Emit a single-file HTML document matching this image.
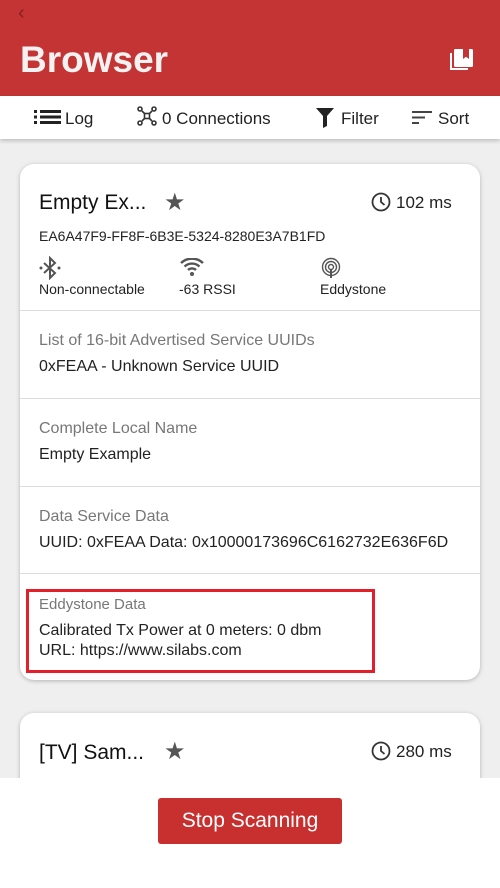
<!DOCTYPE html><html><head><style>
body{margin:0;width:500px;height:888px;overflow:hidden;background:#efefef;font-family:"Liberation Sans",sans-serif;position:relative}
.hdr{position:absolute;top:0;left:0;width:500px;height:96px;background:#c43434}
.hdr h1{position:absolute;left:20px;top:39px;margin:0;font-weight:bold;font-size:37px;color:#f2f2f2}
.tb{position:absolute;top:96px;left:0;width:500px;height:43px;background:#fff;box-shadow:0 2px 4px rgba(0,0,0,.2);font-size:17px;color:#222}
.tb span{position:absolute;top:13px}
.card{position:absolute;left:20px;width:460px;background:#fff;border-radius:14px;box-shadow:0 1px 4px rgba(0,0,0,.25)}
.t{position:absolute;white-space:nowrap}
.sec{position:absolute;left:0;width:460px;border-top:1px solid #ddd}
.g{color:#777;font-size:16px}.b{color:#222;font-size:16px}
</style></head><body>
<div class="hdr"><div class="t" style="left:18px;top:2px;color:#8a2020;font-size:20px">‹</div><h1>Browser</h1>
<svg style="position:absolute;left:449px;top:48px" width="25" height="24" viewBox="0 0 25 24"><path d="M1 5v17h18v-2H3V5z" fill="#fff"/><rect x="5" y="1" width="19" height="18" rx="1.5" fill="#fff"/><path d="M14 1h6v10l-3-2.3L14 11z" fill="#c43434"/></svg></div>
<div class="tb">
<svg style="position:absolute;left:34px;top:14px" width="27" height="14"><g fill="#222"><rect x="0" y="0" width="3" height="3"/><rect x="0" y="5.5" width="3" height="3"/><rect x="0" y="11" width="3" height="3"/><rect x="6" y="0" width="21" height="3"/><rect x="6" y="5.5" width="21" height="3"/><rect x="6" y="11" width="21" height="3"/></g></svg>
<span style="left:65px">Log</span>
<svg style="position:absolute;left:137px;top:10px" width="20" height="20" viewBox="0 0 20 20" fill="none" stroke="#333" stroke-width="1.6"><circle cx="3" cy="3" r="2"/><circle cx="17" cy="3" r="2"/><circle cx="3" cy="17" r="2"/><circle cx="17" cy="17" r="2"/><path d="M5 5l3 3M15 5l-3 3M5 15l3-3M15 15l-3-3"/><rect x="7.5" y="7.5" width="5" height="5"/></svg>
<span style="left:162px">0 Connections</span>
<svg style="position:absolute;left:316px;top:12px" width="18" height="20"><path d="M0 0h18l-7 8v10l-4 2V8z" fill="#222"/></svg>
<span style="left:341px">Filter</span>
<svg style="position:absolute;left:412px;top:15px" width="20" height="13"><g fill="#444"><rect width="20" height="2"/><rect y="5.5" width="13" height="2"/><rect y="11" width="7" height="2"/></g></svg>
<span style="left:438px">Sort</span></div>

<div class="card" style="top:164px;height:516px">
<div class="t" style="left:19px;top:27px;font-size:21px;color:#111">Empty Ex...</div>
<div class="t" style="left:144px;top:24px;font-size:24px;color:#555">★</div>
<svg style="position:absolute;left:351px;top:28px" width="20" height="20"><circle cx="10" cy="10" r="8.5" fill="none" stroke="#333" stroke-width="1.8"/><path d="M10 5v5l3.5 3" stroke="#333" stroke-width="1.8" fill="none"/></svg>
<div class="t b" style="left:376px;top:29px;font-size:17px">102 ms</div>
<div class="t b" style="left:19px;top:64px;font-size:14px">EA6A47F9-FF8F-6B3E-5324-8280E3A7B1FD</div>
<svg style="position:absolute;left:19px;top:92px" width="22" height="24" viewBox="0 0 22 24"><path d="M5 7l11 10-5 5V2l5 5L5 17" fill="none" stroke="#555" stroke-width="2"/><circle cx="2" cy="12" r="1.5" fill="#555"/><circle cx="20" cy="12" r="1.5" fill="#555"/></svg>
<svg style="position:absolute;left:160px;top:94px" width="24" height="18" viewBox="0 0 24 18"><path d="M1 5a16 16 0 0 1 22 0M4.5 8.5a11 11 0 0 1 15 0M8 12a6 6 0 0 1 8 0" stroke="#555" stroke-width="2.4" fill="none"/><circle cx="12" cy="16" r="2" fill="#555"/></svg>
<svg style="position:absolute;left:301px;top:93px" width="20" height="22"><g fill="none" stroke="#555" stroke-width="1.4"><circle cx="10" cy="10" r="2.5"/><circle cx="10" cy="10" r="5.5"/><circle cx="10" cy="10" r="8.5"/></g><path d="M10 12v9" stroke="#555" stroke-width="2"/></svg>
<div class="t b" style="left:19px;top:117px;font-size:14px">Non-connectable</div>
<div class="t b" style="left:159px;top:117px;font-size:14px">-63 RSSI</div>
<div class="t b" style="left:300px;top:117px;font-size:14px">Eddystone</div>
<div class="sec" style="top:146px"><div class="t g" style="left:19px;top:21px">List of 16-bit Advertised Service UUIDs</div><div class="t b" style="left:19px;top:47px">0xFEAA - Unknown Service UUID</div></div>
<div class="sec" style="top:234px"><div class="t g" style="left:19px;top:21px">Complete Local Name</div><div class="t b" style="left:19px;top:47px">Empty Example</div></div>
<div class="sec" style="top:322px"><div class="t g" style="left:19px;top:21px">Data Service Data</div><div class="t b" style="left:19px;top:47px">UUID: 0xFEAA Data: 0x10000173696C6162732E636F6D</div></div>
<div class="sec" style="top:409px"></div>
<div style="position:absolute;left:6px;top:425px;width:349px;height:84px;border:3px solid #e3202a;box-sizing:border-box"></div>
<div class="t g" style="left:19px;top:432px;font-size:15px">Eddystone Data</div>
<div class="t b" style="left:19px;top:458px">Calibrated Tx Power at 0 meters: 0 dbm</div>
<div class="t b" style="left:19px;top:478px">URL: https://www.silabs.com</div>
</div>

<div class="card" style="top:713px;height:140px">
<div class="t" style="left:19px;top:28px;font-size:21px;color:#111">[TV] Sam...</div>
<div class="t" style="left:144px;top:24px;font-size:24px;color:#555">★</div>
<svg style="position:absolute;left:351px;top:28px" width="20" height="20"><circle cx="10" cy="10" r="8.5" fill="none" stroke="#333" stroke-width="1.8"/><path d="M10 5v5l3.5 3" stroke="#333" stroke-width="1.8" fill="none"/></svg>
<div class="t b" style="left:376px;top:29px;font-size:17px">280 ms</div>
</div>
<div style="position:absolute;left:0;top:778px;width:500px;height:110px;background:#fff"></div>
<div style="position:absolute;left:158px;top:798px;width:184px;height:46px;background:#c8302f;border-radius:3px;color:#fff;font-size:21px;text-align:center;line-height:46px">Stop Scanning</div>
</body></html>
